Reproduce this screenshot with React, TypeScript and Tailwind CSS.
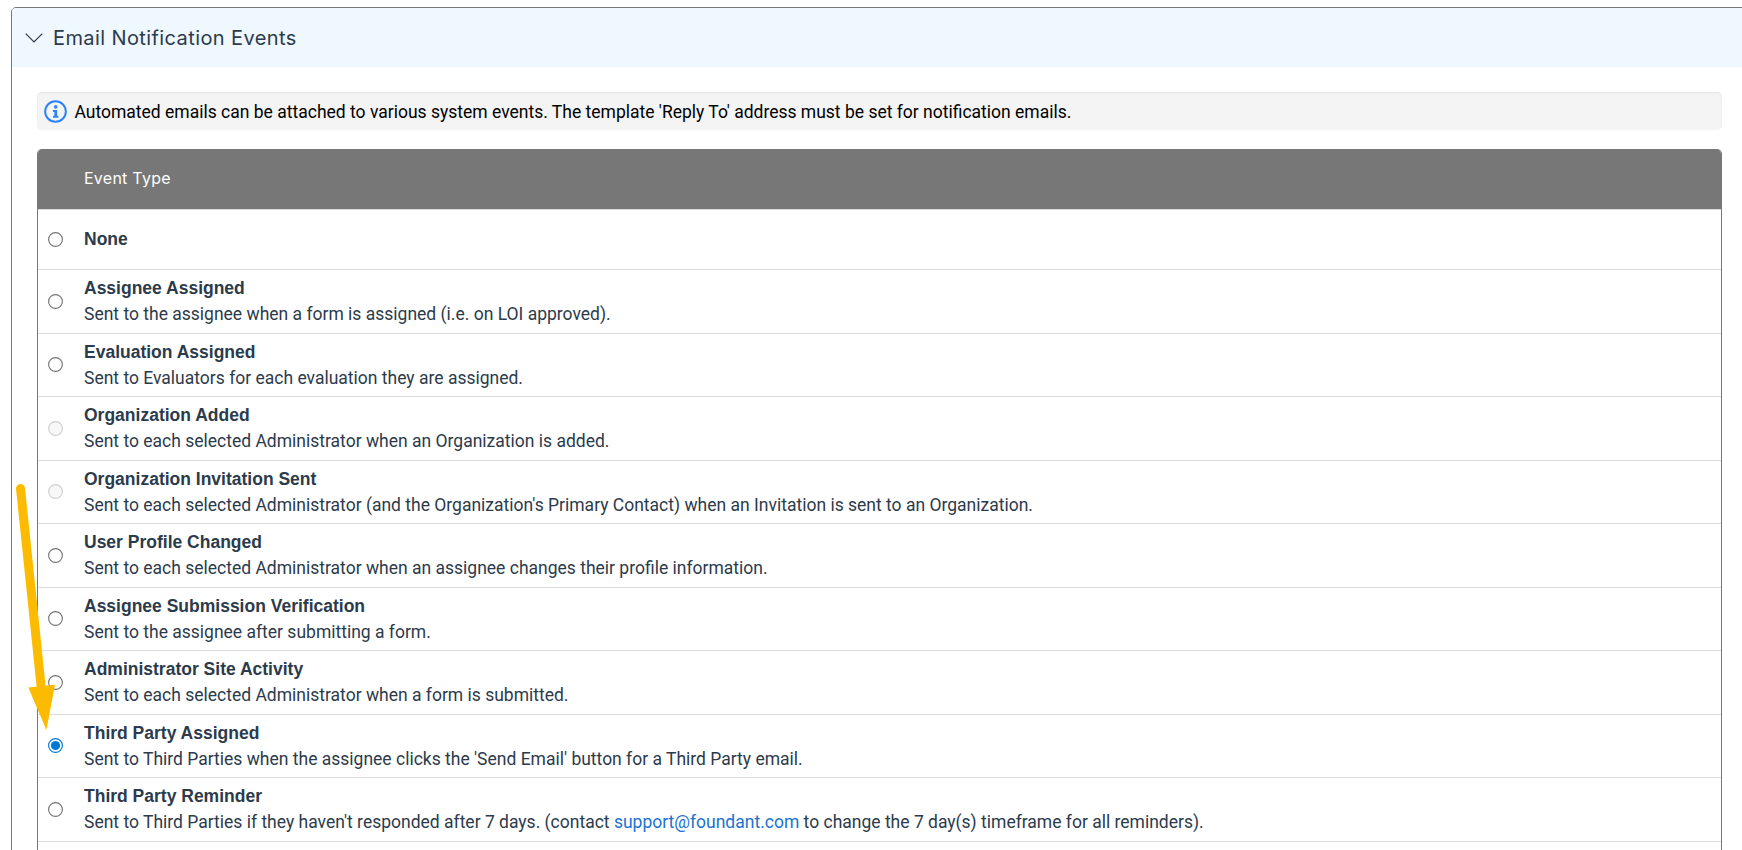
import { useState } from 'react';
import type { ReactNode } from 'react';

type EventType = {
  id: string;
  name: string;
  description?: ReactNode;
  disabled?: boolean;
};

const eventTypes: EventType[] = [
  { id: 'none', name: 'None' },
  {
    id: 'assignee-assigned',
    name: 'Assignee Assigned',
    description: 'Sent to the assignee when a form is assigned (i.e. on LOI approved).',
  },
  {
    id: 'evaluation-assigned',
    name: 'Evaluation Assigned',
    description: 'Sent to Evaluators for each evaluation they are assigned.',
  },
  {
    id: 'organization-added',
    name: 'Organization Added',
    description: 'Sent to each selected Administrator when an Organization is added.',
    disabled: true,
  },
  {
    id: 'organization-invitation',
    name: 'Organization Invitation Sent',
    description:
      "Sent to each selected Administrator (and the Organization's Primary Contact) when an Invitation is sent to an Organization.",
    disabled: true,
  },
  {
    id: 'profile-changed',
    name: 'User Profile Changed',
    description: 'Sent to each selected Administrator when an assignee changes their profile information.',
  },
  {
    id: 'submission-verification',
    name: 'Assignee Submission Verification',
    description: 'Sent to the assignee after submitting a form.',
  },
  {
    id: 'site-activity',
    name: 'Administrator Site Activity',
    description: 'Sent to each selected Administrator when a form is submitted.',
  },
  {
    id: 'third-party-assigned',
    name: 'Third Party Assigned',
    description: "Sent to Third Parties when the assignee clicks the 'Send Email' button for a Third Party email.",
  },
  {
    id: 'third-party-reminder',
    name: 'Third Party Reminder',
    description: (
      <>
        Sent to Third Parties if they haven't responded after 7 days. (contact{' '}
        <a href="mailto:support@foundant.com" className="text-[#1a73d1]">support@foundant.com</a> to change the 7
        day(s) timeframe for all reminders).
      </>
    ),
  },
];

function Radio({ checked, disabled, onSelect }: { checked: boolean; disabled?: boolean; onSelect: () => void }) {
  return (
    <button
      type="button"
      role="radio"
      aria-checked={checked}
      disabled={disabled}
      onClick={onSelect}
      className="mb-[0.5px] ml-[10px] mr-[21px] size-[15px] shrink-0"
    >
      <svg viewBox="0 0 15 15" className="block size-[15px]">
        <circle
          cx="7.5"
          cy="7.5"
          r="6.9"
          fill={disabled ? '#f8f8f8' : '#fff'}
          stroke={checked ? '#0078d7' : disabled ? '#cfcfcf' : '#767676'}
          strokeWidth="1.15"
        />
        {checked && <circle cx="7.5" cy="7.5" r="4.6" fill="#0078d7" />}
      </svg>
    </button>
  );
}

export default function App() {
  const [selected, setSelected] = useState('third-party-assigned');

  return (
    <div className="relative h-[850px] w-full overflow-hidden bg-white pl-[11px] pt-[7px] text-[#2c3b4b]">
      <section className="h-[900px] w-[1751px] overflow-hidden rounded-[5px] border border-[#777]">
        <header className="flex h-[59px] items-center bg-[#eff7ff]">
          <svg viewBox="0 0 18 10" className="ml-[13px] h-[10px] w-[18px]" fill="none" stroke="currentColor" strokeWidth="1.2">
            <path d="M0.7 0.7 9 9 17.3 0.7" />
          </svg>
          <h2 className="ml-[10px] font-['Inter',sans-serif] text-[20px] tracking-[0.4px]">Email Notification Events</h2>
        </header>

        <div className="w-[1710px] pl-[25px] pt-[25px]">
          <div className="flex h-[38px] items-center rounded-[5px] bg-[#f4f4f4] pl-[7px] pt-px font-['Roboto',sans-serif] text-[17.5px] text-black shadow-[inset_0_1px_2px_rgba(0,0,0,0.07)]">
            <svg viewBox="0 0 22 22" className="size-[23px]" fill="none">
              <circle cx="11" cy="11" r="9.9" stroke="#2b84f8" strokeWidth="1.9" />
              <circle cx="11.2" cy="6.6" r="1.7" fill="#2b84f8" />
              <path d="M8.6 9.6h4v5.4h1.2v1.9H8.6V15h1.3v-3.5H8.6z" fill="#2b84f8" />
            </svg>
            <span className="ml-[7.5px] pt-px">
              Automated emails can be attached to various system events. The template 'Reply To' address must be set for
              notification emails.
            </span>
          </div>

          <div className="mt-[19px] overflow-hidden rounded-t-[5px] border-x border-[#777]">
            <div className="flex h-[60px] items-center bg-[#777] pb-0.5 pl-[46px] font-['Inter',sans-serif] text-[16px] tracking-[0.25px] text-white">
              Event Type
            </div>
            <div role="radiogroup">
              {eventTypes.map((event) => (
                <div
                  key={event.id}
                  className={`flex items-center border-t border-[#dcdcdc] ${event.description ? 'h-[63.5px]' : 'h-[60.1px]'}`}
                >
                  <Radio
                    checked={selected === event.id}
                    disabled={event.disabled}
                    onSelect={() => setSelected(event.id)}
                  />
                  <div className={`text-[17.5px] leading-[26px] ${event.description ? '' : 'pb-px'}`}>
                    <div className="font-['Liberation_Sans',Arial,sans-serif] font-bold">{event.name}</div>
                    {event.description && (
                      <div className="whitespace-nowrap font-['Roboto',sans-serif]">{event.description}</div>
                    )}
                  </div>
                </div>
              ))}
              <div className="h-[63.5px] border-t border-[#dcdcdc]" />
            </div>
          </div>
        </div>
      </section>

      {/* pointer to the selected event */}
      <svg className="pointer-events-none absolute left-0 top-[470px]" width="80" height="270" viewBox="0 470 80 270">
        <path d="M20.5 488.5 41.5 690" stroke="#fdbb00" strokeWidth="9" strokeLinecap="round" />
        <path d="M28.3 687.5 55 684.7 46.4 730z" fill="#fdbb00" />
      </svg>
    </div>
  );
}
